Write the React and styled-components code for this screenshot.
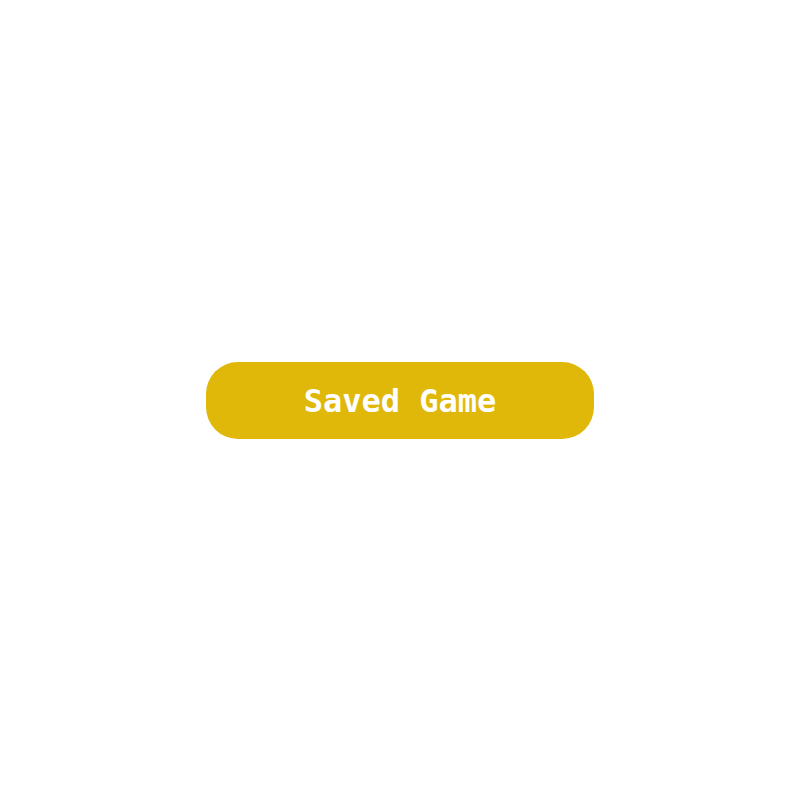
import React from "react";
import styled, { createGlobalStyle } from "styled-components";

const GlobalStyle = createGlobalStyle`
  html, body {
    margin: 0;
    padding: 0;
    background: #ffffff;
  }
`;

const Page = styled.div`
  width: 100vw;
  height: 100vh;
  display: flex;
  align-items: center;
  justify-content: center;
`;

const SaveButton = styled.button`
  width: 388px;
  height: 77px;
  padding: 2px 0 0;
  border: none;
  border-radius: 32px;
  background: #e0b80a;
  color: #ffffff;
  font-family: "DejaVu Sans Mono", "Liberation Mono", monospace;
  font-weight: bold;
  font-size: 32px;
  cursor: pointer;
  display: flex;
  align-items: center;
  justify-content: center;
`;

export default function App() {
  return (
    <>
      <GlobalStyle />
      <Page>
        <SaveButton>Saved Game</SaveButton>
      </Page>
    </>
  );
}
